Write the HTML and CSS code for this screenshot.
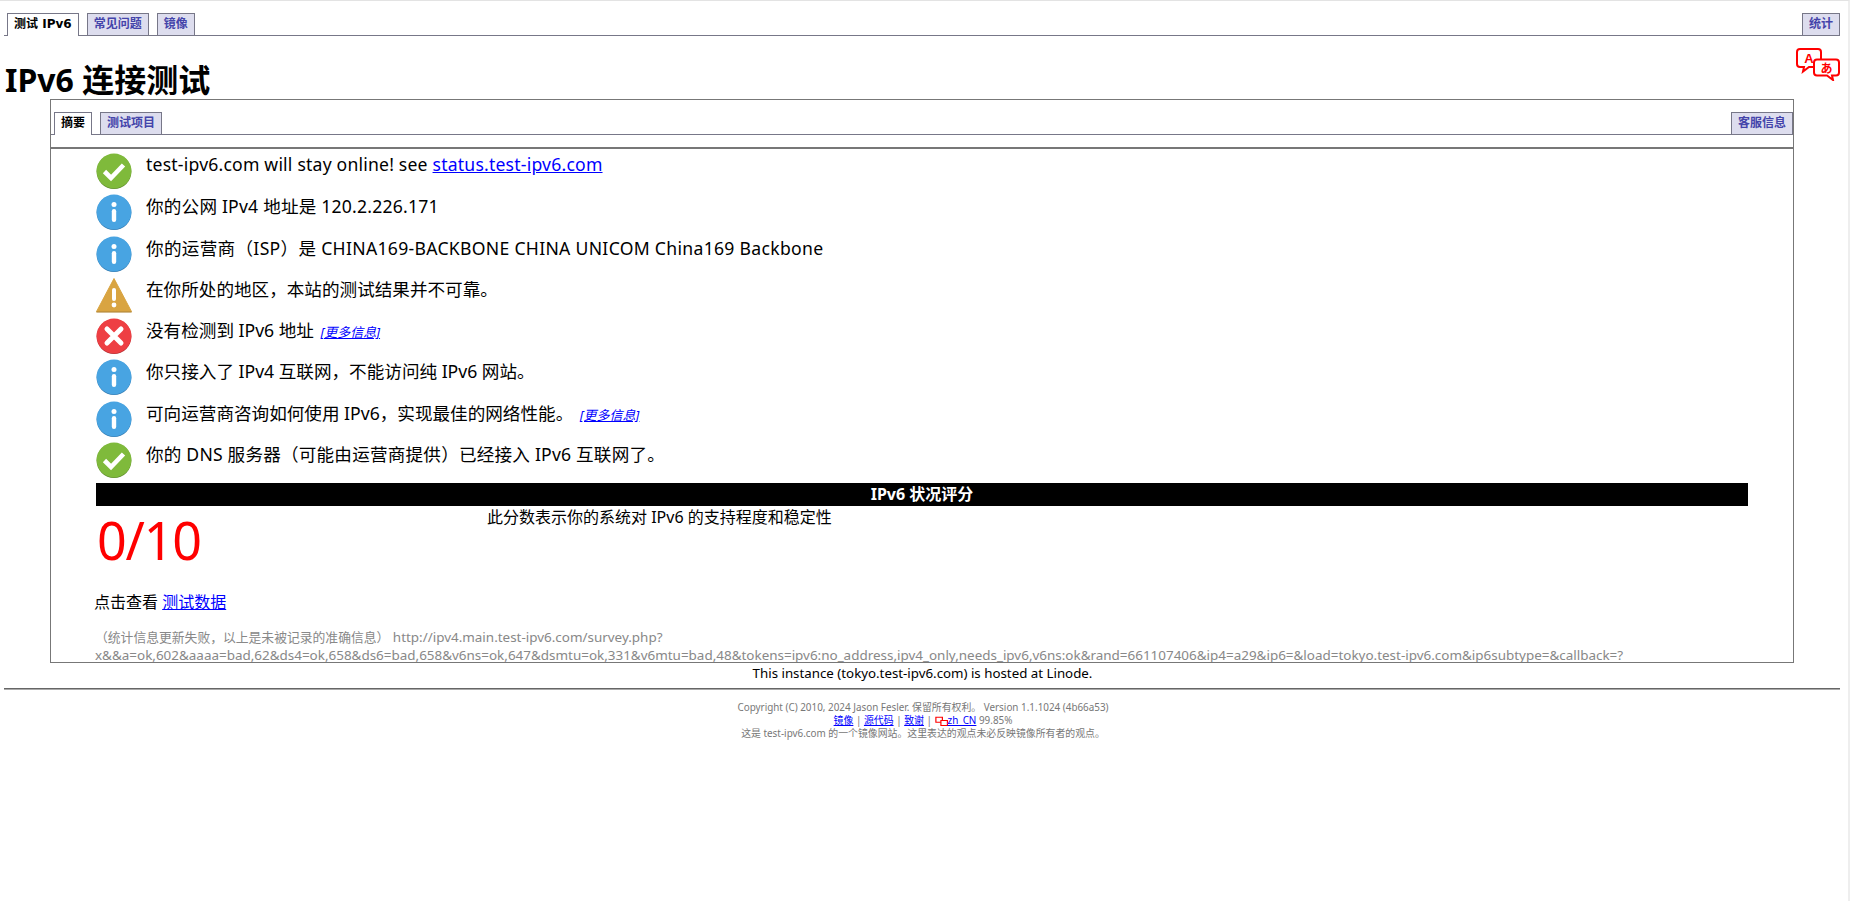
FILE: index.html
```html
<!DOCTYPE html>
<html lang="zh-CN">
<head>
    <meta charset="UTF-8">
    <title>IPv6 连接测试</title>
    <link rel="stylesheet" href="styles.css">
</head>
<body>
    <!-- Top navigation -->
    <div class="tabs top-tabs">
        <a class="tab active" href="#">测试 IPv6</a>
        <a class="tab" href="#">常见问题</a>
        <a class="tab" href="#">镜像</a>
        <a class="tab tab-right" href="#">统计</a>
    </div>

    <div class="title-row">
        <h1>IPv6 连接测试</h1>
        <svg class="lang-icon" width="44" height="33" viewBox="0 0 44 33" fill="#fff" stroke="#f00" stroke-width="2">
            <path d="M4 1h18q3 0 3 3v12q0 3-3 3H13l-6 4.500 1-4.500H4q-3 0-3-3V4q0-3 3-3z"/>
            <path d="M21 11.500h19q3 0 3 3v10q0 3-3 3h-4l1 4.500-6-4.500H21q-3 0-3-3v-10q0-3 3-3z"/>
            <text x="13" y="15" class="lang-a">A</text>
            <text x="30.500" y="24.500" class="lang-b">あ</text>
        </svg>
    </div>

    <div class="content-box">
        <div class="tabs inner-tabs">
            <a class="tab active" href="#">摘要</a>
            <a class="tab" href="#">测试项目</a>
            <a class="tab tab-right" href="#">客服信息</a>
        </div>

        <div class="summary">
            <div class="result">
                <svg class="icon" viewBox="0 0 36 36"><use href="#i-ok"/></svg>
                <p class="latin first-line">test-ipv6.com will stay online! see <a href="#">status.test-ipv6.com</a></p>
            </div>
            <div class="result">
                <svg class="icon" viewBox="0 0 36 36"><use href="#i-info"/></svg>
                <p class="latin">你的公网 IPv4 地址是 120.2.226.171</p>
            </div>
            <div class="result">
                <svg class="icon" viewBox="0 0 36 36"><use href="#i-info"/></svg>
                <p class="latin-wide">你的运营商（ISP）是 CHINA169-BACKBONE CHINA UNICOM China169 Backbone</p>
            </div>
            <div class="result">
                <svg class="icon" viewBox="0 0 36 36"><use href="#i-warn"/></svg>
                <p>在你所处的地区，本站的测试结果并不可靠。</p>
            </div>
            <div class="result">
                <svg class="icon" viewBox="0 0 36 36"><use href="#i-bad"/></svg>
                <p>没有检测到 IPv6 地址 <a class="more" href="#">[更多信息]</a></p>
            </div>
            <div class="result">
                <svg class="icon" viewBox="0 0 36 36"><use href="#i-info"/></svg>
                <p>你只接入了 IPv4 互联网，不能访问纯 IPv6 网站。</p>
            </div>
            <div class="result">
                <svg class="icon" viewBox="0 0 36 36"><use href="#i-info"/></svg>
                <p>可向运营商咨询如何使用 IPv6，实现最佳的网络性能。 <a class="more" href="#">[更多信息]</a></p>
            </div>
            <div class="result">
                <svg class="icon" viewBox="0 0 36 36"><use href="#i-ok"/></svg>
                <p class="latin">你的 DNS 服务器（可能由运营商提供）已经接入 IPv6 互联网了。</p>
            </div>

            <div class="score-head">IPv6 状况评分</div>
            <div class="score-row">
                <div class="score">0/10</div>
                <div class="score-note">此分数表示你的系统对 IPv6 的支持程度和稳定性</div>
            </div>
            <p class="data-link">点击查看 <a href="#">测试数据</a></p>
            <p class="survey"><span class="survey-cjk">（统计信息更新失败，以上是未被记录的准确信息）</span> http://ipv4.main.test-ipv6.com/survey.php?<br>x&amp;&amp;a=ok,602&amp;aaaa=bad,62&amp;ds4=ok,658&amp;ds6=bad,658&amp;v6ns=ok,647&amp;dsmtu=ok,331&amp;v6mtu=bad,48&amp;tokens=ipv6:no_address,ipv4_only,needs_ipv6,v6ns:ok&amp;rand=661107406&amp;ip4=a29&amp;ip6=&amp;load=tokyo.test-ipv6.com&amp;ip6subtype=&amp;callback=?</p>
        </div>
    </div>

    <div class="instance">This instance (tokyo.test-ipv6.com) is hosted at Linode.</div>
    <hr class="rule">
    <div class="footer">
        Copyright (C) 2010, 2024 Jason Fesler. 保留所有权利。 Version 1.1.1024 (4b66a53)<br>
        <a href="#">镜像</a> | <a href="#">源代码</a> | <a href="#">致谢</a> |
        <svg class="lang-mini" width="13" height="11" viewBox="0 0 44 33" fill="#fff" stroke="#f00" stroke-width="4"><path d="M3 2h22v17H3z"/><path d="M20 13h22v17H20z"/></svg><a href="#">zh_CN</a> 99.85%<br>
        这是 test-ipv6.com 的一个镜像网站。这里表达的观点未必反映镜像所有者的观点。
    </div>

    <!-- Status icons -->
    <svg class="defs" width="0" height="0">
        <defs>
            <g id="i-ok">
                <circle cx="18" cy="18.600" r="17.400" fill="#5d8a2c"/>
                <circle cx="18" cy="18" r="17.400" fill="#7fba3b"/>
                <path d="M8.500 18.500l6.500 6.500L27.500 12" fill="none" stroke="#fff" stroke-width="4.600"/>
            </g>
            <g id="i-info">
                <circle cx="18" cy="18.600" r="17.400" fill="#327ab0"/>
                <circle cx="18" cy="18" r="17.400" fill="#48a4e2"/>
                <circle cx="18" cy="10.500" r="2.500" fill="#fff"/>
                <rect x="15.800" y="15" width="4.400" height="13" rx="2.200" fill="#fff"/>
            </g>
            <g id="i-warn">
                <path d="M18 1.500L35.500 34.600H.5z" fill="#d9a441" stroke="#d9a441" stroke-linejoin="round"/>
                <path d="M.4 34.400h35.200v1H.4z" fill="#a97e30"/>
                <rect x="16" y="11" width="4" height="13" rx="2" fill="#fff"/>
                <circle cx="18" cy="28" r="2.400" fill="#fff"/>
            </g>
            <g id="i-bad">
                <circle cx="18" cy="18.600" r="17.400" fill="#b32f33"/>
                <circle cx="18" cy="18" r="17.400" fill="#ee3f43"/>
                <path d="M11 11l14 14M25 11L11 25" fill="none" stroke="#fff" stroke-width="5" stroke-linecap="round"/>
            </g>
        </defs>
    </svg>
</body>
</html>
```

FILE: styles.css
```css
html, body { margin: 0; padding: 0; }
body { font-family: "Noto Sans", "Noto Sans CJK SC", sans-serif; font-size: 16px; color: #000; background: #fff; border-top: 1px solid #e3e3e3; border-right: 2px solid #eee; height: 901px; overflow: hidden; box-sizing: border-box; }
p { margin: 0; }
a { color: #00f; }

/* tabs */
.tabs { display: flex; align-items: flex-end; gap: 8px; border-bottom: 1px solid #778; }
.top-tabs { height: 34px; margin: 0 8px 0 4px; padding: 0 0 0 3px; }
.inner-tabs { height: 34px; padding: 0 0 0 3px; margin-bottom: 13px; }
.tab { display: block; height: 21px; padding: 0 6px; font: bold 12px/21px "DejaVu Sans", "Noto Sans CJK SC", sans-serif; color: #44a; background: #dde; border: 1px solid #778; border-bottom: none; text-decoration: none; white-space: nowrap; }
.tab.active { color: #000; background: #fff; height: 22px; margin-bottom: -1px; }
.tab-right { margin-left: auto; }

/* heading */
.title-row { display: flex; justify-content: space-between; padding: 12px 8px 0 5px; height: 63px; box-sizing: border-box; }
h1 { margin: 12px 0 0; font-size: 32px; line-height: 40px; font-weight: bold; }
.lang-a { font: bold 13px "Liberation Sans", sans-serif; fill: #f00; stroke: none; text-anchor: middle; }
.lang-b { font: bold 12px "Noto Sans CJK JP", sans-serif; fill: #f00; stroke: none; text-anchor: middle; }

/* main box */
.content-box { margin: 0 54px 0 50px; border: 1px solid #777; height: 564px; overflow: hidden; box-sizing: border-box; }
.summary { border-top: 2px solid #777; margin-top: -1px; padding: 0 45px; }
.result { display: flex; gap: 14px; height: 41.3px; padding-top: 3px; box-sizing: border-box; }
.result:first-child { margin-top: -1px; }
.result p { font-size: 17.6px; line-height: 25px; margin-top: 2px; white-space: nowrap; }
.result p.first-line { margin-top: 1px; }
.result p.latin { letter-spacing: .2px; }
.result p.latin-wide { letter-spacing: .3px; }
.icon { width: 36px; height: 36px; flex: none; margin-top: 2px; }
.more { font-size: 13px; font-style: italic; margin-left: 2px; }

/* score */
.score-head { background: #000; color: #fff; font-weight: bold; font-size: 16px; line-height: 23px; text-align: center; margin-top: 5px; }
.score-row { display: flex; height: 67px; }
.score { width: 391px; padding-left: 1px; color: #f00; font-size: 52px; line-height: 68px; letter-spacing: -1.2px; }
.score-note { line-height: 23px; font-size: 16px; margin-left: -1px; }
.data-link { margin-top: 17px; line-height: 24px; margin-left: -2px; }
.survey { margin-top: 14px; margin-left: -1px; color: #888; font-size: 13.45px; line-height: 18px; white-space: nowrap; }
.survey-cjk { font-size: 12.8px; }

/* footer */
.instance { text-align: center; font-size: 13.3px; line-height: 20px; padding-right: 3px; }
.rule { margin: 5px 8px 0 4px; border: none; border-top: 1px solid #666; border-bottom: 1px solid #aaa; height: 0; }
.footer { margin-top: 11px; padding-right: 2px; text-align: center; font-size: 9.9px; line-height: 13px; color: #777; }
.lang-mini { vertical-align: middle; }
.defs { position: absolute; }
```
